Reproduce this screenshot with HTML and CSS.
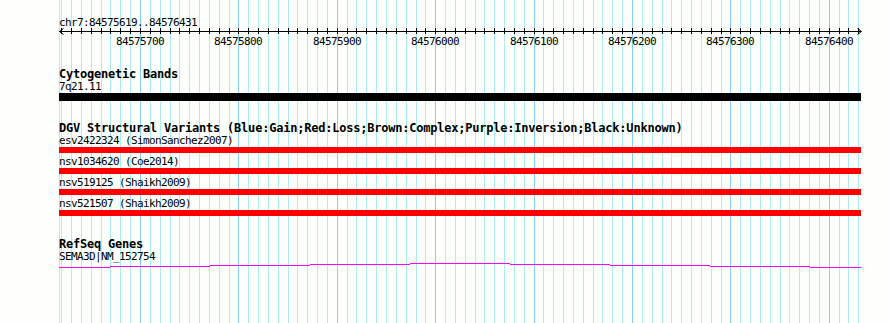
FILE: index.html
```html
<!DOCTYPE html>
<html lang="en">
<head>
<meta charset="utf-8">
<title>chr7:84575619..84576431</title>
<link rel="stylesheet" href="styles.css">
</head>
<body>
<div class="panel">
  <svg class="grid" id="grid" width="890" height="323" xmlns="http://www.w3.org/2000/svg"></svg>
  <div class="content">
    <div class="ruler-title">chr7:84575619..84576431</div>
    <svg class="ruler" width="890" height="20" xmlns="http://www.w3.org/2000/svg">
      <line class="ruler-line" x1="59" y1="4.5" x2="861" y2="4.5"/>
      <polyline class="ruler-arrow" points="63.5,1.5 59.5,4.5 63.5,7.5"/>
      <polyline class="ruler-arrow" points="857.5,1.5 861.5,4.5 857.5,7.5"/>
      <g id="ticks"></g>
      <text class="ruler-label" x="116" y="18">84575700</text>
      <text class="ruler-label" x="214" y="18">84575800</text>
      <text class="ruler-label" x="313" y="18">84575900</text>
      <text class="ruler-label" x="411" y="18">84576000</text>
      <text class="ruler-label" x="510" y="18">84576100</text>
      <text class="ruler-label" x="608" y="18">84576200</text>
      <text class="ruler-label" x="706" y="18">84576300</text>
      <text class="ruler-label" x="805" y="18">84576400</text>
    </svg>

    <section class="track track--bands">
      <div class="track-title">Cytogenetic Bands</div>
      <div class="feature">
        <div class="feature-label feature-label--short">7q21.11</div>
        <div class="bar bar--band"></div>
      </div>
    </section>

    <section class="track track--dgv">
      <div class="track-title">DGV Structural Variants (Blue:Gain;Red:Loss;Brown:Complex;Purple:Inversion;Black:Unknown)</div>
      <div class="feature">
        <div class="feature-label">esv2422324 (SimonSanchez2007)</div>
        <div class="bar bar--loss"></div>
      </div>
      <div class="feature">
        <div class="feature-label">nsv1034620 (Coe2014)</div>
        <div class="bar bar--loss"></div>
      </div>
      <div class="feature">
        <div class="feature-label">nsv519125 (Shaikh2009)</div>
        <div class="bar bar--loss"></div>
      </div>
      <div class="feature">
        <div class="feature-label">nsv521507 (Shaikh2009)</div>
        <div class="bar bar--loss"></div>
      </div>
    </section>

    <section class="track track--genes">
      <div class="track-title">RefSeq Genes</div>
      <div class="feature">
        <div class="feature-label">SEMA3D|NM_152754</div>
        <svg class="gene" width="890" height="6" xmlns="http://www.w3.org/2000/svg">
          <path class="gene-line" d="M59 4.5H110M110 3.5H210M210 2.5H310M310 1.5H410M410 0.5H510M510 1.5H610M610 2.5H710M710 3.5H810M810 4.5H861"/>
        </svg>
      </div>
    </section>
  </div>
</div>
<script src="script.js"></script>
</body>
</html>
```

FILE: styles.css
```css
html, body {
  margin: 0;
  padding: 0;
  background: #fcfffc;
}

.panel {
  position: relative;
  width: 890px;
  height: 323px;
  overflow: hidden;
  background: #fcfffc;
  color: #000;
  font-family: "DejaVu Sans Mono", "Liberation Mono", monospace;
}

.grid {
  position: absolute;
  left: 0;
  top: 0;
  z-index: 0;
  shape-rendering: crispEdges;
}

.grid-minor {
  stroke: #afeeee;
  stroke-width: 1;
}

.grid-major {
  stroke: #87cefa;
  stroke-width: 1;
}

.content {
  position: relative;
  z-index: 1;
}

.ruler-title {
  height: 11px;
  padding-top: 16px;
  padding-left: 59px;
  font-size: 11px;
  line-height: 13px;
  letter-spacing: -0.62px;
  white-space: nowrap;
}

.ruler {
  display: block;
  shape-rendering: crispEdges;
}

.ruler-line,
.tick {
  stroke: #000;
  stroke-width: 1;
}

.ruler-arrow {
  fill: none;
  stroke: #000;
  stroke-width: 1;
  shape-rendering: auto;
}

.ruler-label {
  font-family: "DejaVu Sans Mono", "Liberation Mono", monospace;
  font-size: 11px;
  letter-spacing: -0.62px;
  fill: #000;
}

.track {
  margin-top: 21px;
}

.track--genes {
  margin-top: 22px;
}

.track-title {
  height: 12px;
  padding-left: 59px;
  font-size: 12px;
  font-weight: bold;
  line-height: 13px;
  letter-spacing: -0.22px;
  white-space: nowrap;
}

.feature + .feature {
  margin-top: 2px;
}

.feature-label {
  height: 13px;
  padding-left: 59px;
  font-size: 11px;
  line-height: 13px;
  letter-spacing: -0.62px;
  white-space: nowrap;
}

.feature-label--short {
  height: 13px;
}

.bar {
  margin-left: 59px;
  width: 802px;
}

.bar--band {
  height: 8px;
  background: #000;
}

.bar--loss {
  height: 6px;
  background: #ff0000;
}

.gene {
  display: block;
  shape-rendering: crispEdges;
}

.gene-line {
  fill: none;
  stroke: #ff00ff;
  stroke-width: 1;
}
```

FILE: script.js
```js
(function () {
  var NS = "http://www.w3.org/2000/svg";
  var grid = document.getElementById("grid");
  var ticks = document.getElementById("ticks");

  function addLine(parent, x1, y1, x2, y2, cls) {
    var l = document.createElementNS(NS, "line");
    l.setAttribute("x1", x1);
    l.setAttribute("y1", y1);
    l.setAttribute("x2", x2);
    l.setAttribute("y2", y2);
    l.setAttribute("class", cls);
    parent.appendChild(l);
  }

  addLine(grid, 59.5, 0, 59.5, 323, "grid-minor");

  for (var k = 0; k < 82; k++) {
    var bp = 84575620 + 10 * k;
    var x = Math.round(61.284 + 9.84 * k) + 0.5;
    var major = bp % 100 === 0;
    addLine(grid, x, 0, x, 323, major ? "grid-major" : "grid-minor");
    addLine(ticks, x, 1, x, 7, "tick");
  }
})();
```
